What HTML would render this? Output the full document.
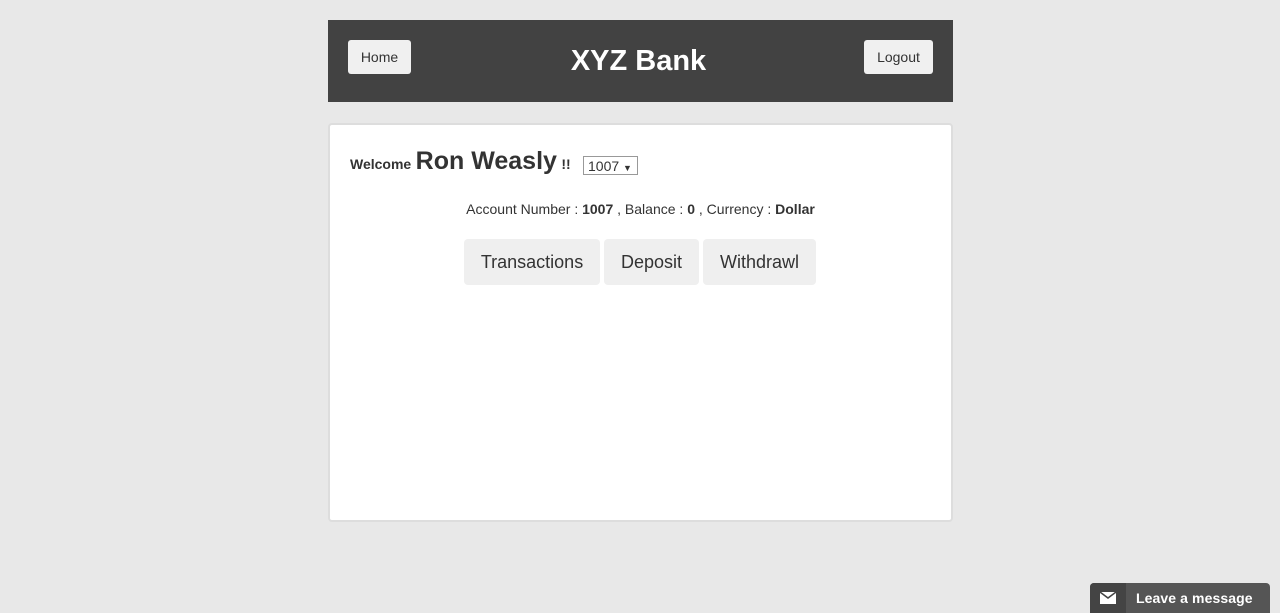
<!DOCTYPE html>
<html><head><style>
body{margin:0;background:#e8e8e8;font-family:"Liberation Sans",sans-serif;color:#333;width:1280px;height:613px;overflow:hidden;position:relative}
.hdr{position:absolute;left:328px;top:20px;width:625px;height:82px;background:#424242}
.btn{position:absolute;background:#f0f0f0;border-radius:3px;font-size:14px;color:#333;text-align:center;line-height:34px;height:34px}
.title{position:absolute;left:0;width:100%;top:25px;text-align:center;color:#fff;font-weight:bold;font-size:29px;padding-right:4px;box-sizing:border-box}
.card{position:absolute;left:328px;top:123px;width:621px;height:395px;background:#fff;border:2px solid #ddd;border-radius:4px}
.big{position:absolute;background:#efefef;border-radius:4px;height:46px;line-height:47px;font-size:18px;text-align:center;top:114px}
</style></head><body>
<div class="hdr">
<div class="btn" style="left:20px;top:20px;width:63px">Home</div>
<div class="title">XYZ Bank</div>
<div class="btn" style="left:536px;top:20px;width:69px">Logout</div>
</div>
<div class="card">
<div style="position:absolute;left:20px;top:22px;white-space:nowrap"><b style="font-size:14px">Welcome</b> <b style="font-size:25px">Ron Weasly</b> <b style="font-size:14px">!!</b></div>
<div style="position:absolute;left:253px;top:31px;width:55px;height:19px;border:1px solid #999;font-size:14px;line-height:18px;box-sizing:border-box;padding-left:4px">1007 <span style="font-size:9px">▼</span></div>
<div style="position:absolute;left:0;width:100%;top:76px;text-align:center;font-size:14px">Account Number : <b>1007</b> , Balance : <b>0</b> , Currency : <b>Dollar</b></div>
<div class="big" style="left:134px;width:136px">Transactions</div>
<div class="big" style="left:274px;width:95px">Deposit</div>
<div class="big" style="left:373px;width:113px">Withdrawl</div>
</div>
<div style="position:absolute;left:1090px;top:583px;width:180px;height:30px;background:#555;border-radius:4px 4px 0 0;overflow:hidden">
<div style="position:absolute;left:0;top:0;width:36px;height:30px;background:#444"></div>
<svg style="position:absolute;left:10px;top:9px" width="16" height="12"><rect width="16" height="12" fill="#fff"/><path d="M0 0L8 6L16 0" stroke="#444" stroke-width="1.5" fill="none"/></svg>
<div style="position:absolute;left:46px;top:7px;color:#fff;font-weight:bold;font-size:14px;letter-spacing:0.1px">Leave a message</div>
</div>
</body></html>
